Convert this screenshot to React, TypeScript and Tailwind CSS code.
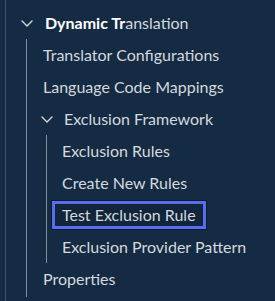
import React from "react";

function Chevron() {
  return (
    <svg width="12" height="7" viewBox="0 0 12 7" fill="none" className="shrink-0">
      <path d="M1 1l5 5 5-5" stroke="#d4d9de" strokeWidth="1.4" strokeLinecap="round" strokeLinejoin="round" />
    </svg>
  );
}

const rules = [
  { name: "Exclusion Rules" },
  { name: "Create New Rules" },
  { name: "Test Exclusion Rule", active: true },
  { name: "Exclusion Provider Pattern" },
];

export default function App() {
  return (
    <div className="w-[275px] h-[301px] overflow-hidden bg-[#152b43] text-[16px] text-[#d4d9de] font-['Lato',sans-serif]">
      <div className="ml-[5px] h-full border-l border-[#3c5369] pt-[7px]">
        {/* Top level */}
        <div className="h-8 flex items-center pl-[15px]">
          <Chevron />
          <span className="ml-[12px] leading-8">
            <span className="font-bold text-white">Dynamic Tr</span>anslation
          </span>
        </div>

        <div className="ml-[20px] border-l border-[#7f8e9c] pb-[2px]">
          <div className="h-8 flex items-center pl-[16px]">Translator Configurations</div>
          <div className="h-8 flex items-center pl-[16px]">Language Code Mappings</div>

          <div className="h-8 flex items-center pl-[14px]">
            <Chevron />
            <span className="ml-[11px]">Exclusion Framework</span>
          </div>

          {/* Exclusion Framework children */}
          <div className="ml-[19px] border-l border-[#7f8e9c]">
            {rules.map((r) => (
              <div key={r.name} className="h-8 flex items-center">
                <span
                  className={
                    r.active
                      ? "ml-[5px] h-7 flex items-center px-[7px] border-[3px] border-[#5a6df0] bg-[#11253b] shadow-[0_0_0_1px_rgba(0,0,0,0.35)]"
                      : "ml-[5px] h-7 flex items-center px-[7px] border-[3px] border-transparent"
                  }
                >
                  {r.name}
                </span>
              </div>
            ))}
          </div>

          <div className="h-8 flex items-center pl-[16px]">Properties</div>
        </div>
      </div>
    </div>
  );
}
